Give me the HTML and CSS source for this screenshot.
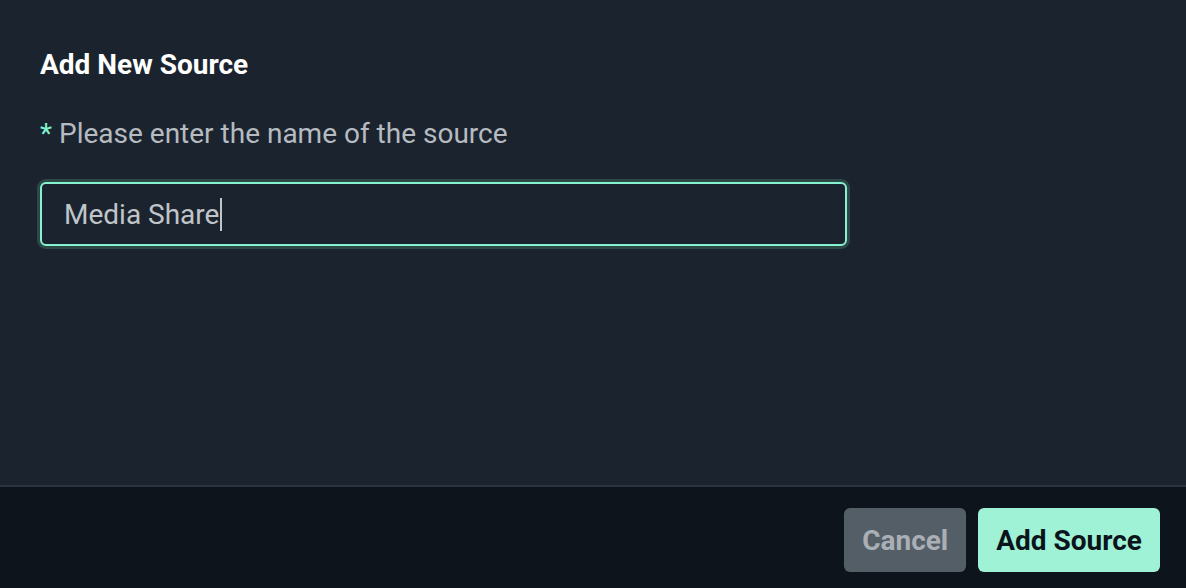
FILE: index.html
```html
<!DOCTYPE html>
<html>
<head>
<meta charset="utf-8">
<link rel="stylesheet" href="styles.css">
</head>
<body>
<div class="modal">
  <div class="content">
    <h1 class="title">Add New Source</h1>
    <div class="label"><span class="req">*</span> Please enter the name of the source</div>
    <div class="input"><span class="value">Media Share</span><span class="caret"></span></div>
  </div>
  <div class="footer">
    <button class="btn btn-cancel">Cancel</button>
    <button class="btn btn-primary">Add Source</button>
  </div>
</div>
</body>
</html>
```
FILE: styles.css
```css
html, body {
  margin: 0;
  padding: 0;
  height: 100%;
  background: #0d141b;
}
body {
  font-family: Roboto, "Liberation Sans", sans-serif;
}
.modal {
  width: 1186px;
  height: 588px;
  display: flex;
  flex-direction: column;
  border-bottom-right-radius: 10px;
  overflow: hidden;
}
.content {
  flex: 1;
  background: #1b242e;
  padding: 48px 40px 0 40px;
  border-bottom: 2px solid #2b353f;
}
.title {
  margin: 0;
  font-size: 28px;
  font-weight: 700;
  color: #ffffff;
  line-height: 34px;
}
.label {
  margin-top: 35px;
  font-size: 28px;
  line-height: 34px;
  color: #b6bbc1;
}
.req {
  color: #7ff2cf;
}
.input {
  margin-top: 31px;
  width: 807px;
  height: 64px;
  box-sizing: border-box;
  border: 2px solid #86f2cf;
  border-radius: 6px;
  box-shadow: 0 0 0 3px #2e4847;
  background: #1b242e;
  display: flex;
  align-items: center;
  padding-left: 22px;
  font-size: 28px;
  color: #c0c5ca;
}
.caret {
  display: inline-block;
  width: 2px;
  height: 33px;
  background: #c0c5ca;
  margin-left: 1px;
}
.footer {
  height: 101px;
  box-sizing: border-box;
  background: #0d141b;
  display: flex;
  justify-content: flex-end;
  align-items: flex-start;
  gap: 12px;
  padding: 21px 26px 0 0;
}
.btn {
  height: 64px;
  border: none;
  border-radius: 6px;
  font-family: Roboto, "Liberation Sans", sans-serif;
  font-size: 28px;
  font-weight: 700;
  padding: 0 18px;
  cursor: pointer;
}
.btn-cancel {
  background: #545e66;
  color: #a9afb5;
}
.btn-primary {
  background: #9ff2d6;
  color: #0b141b;
}
```
